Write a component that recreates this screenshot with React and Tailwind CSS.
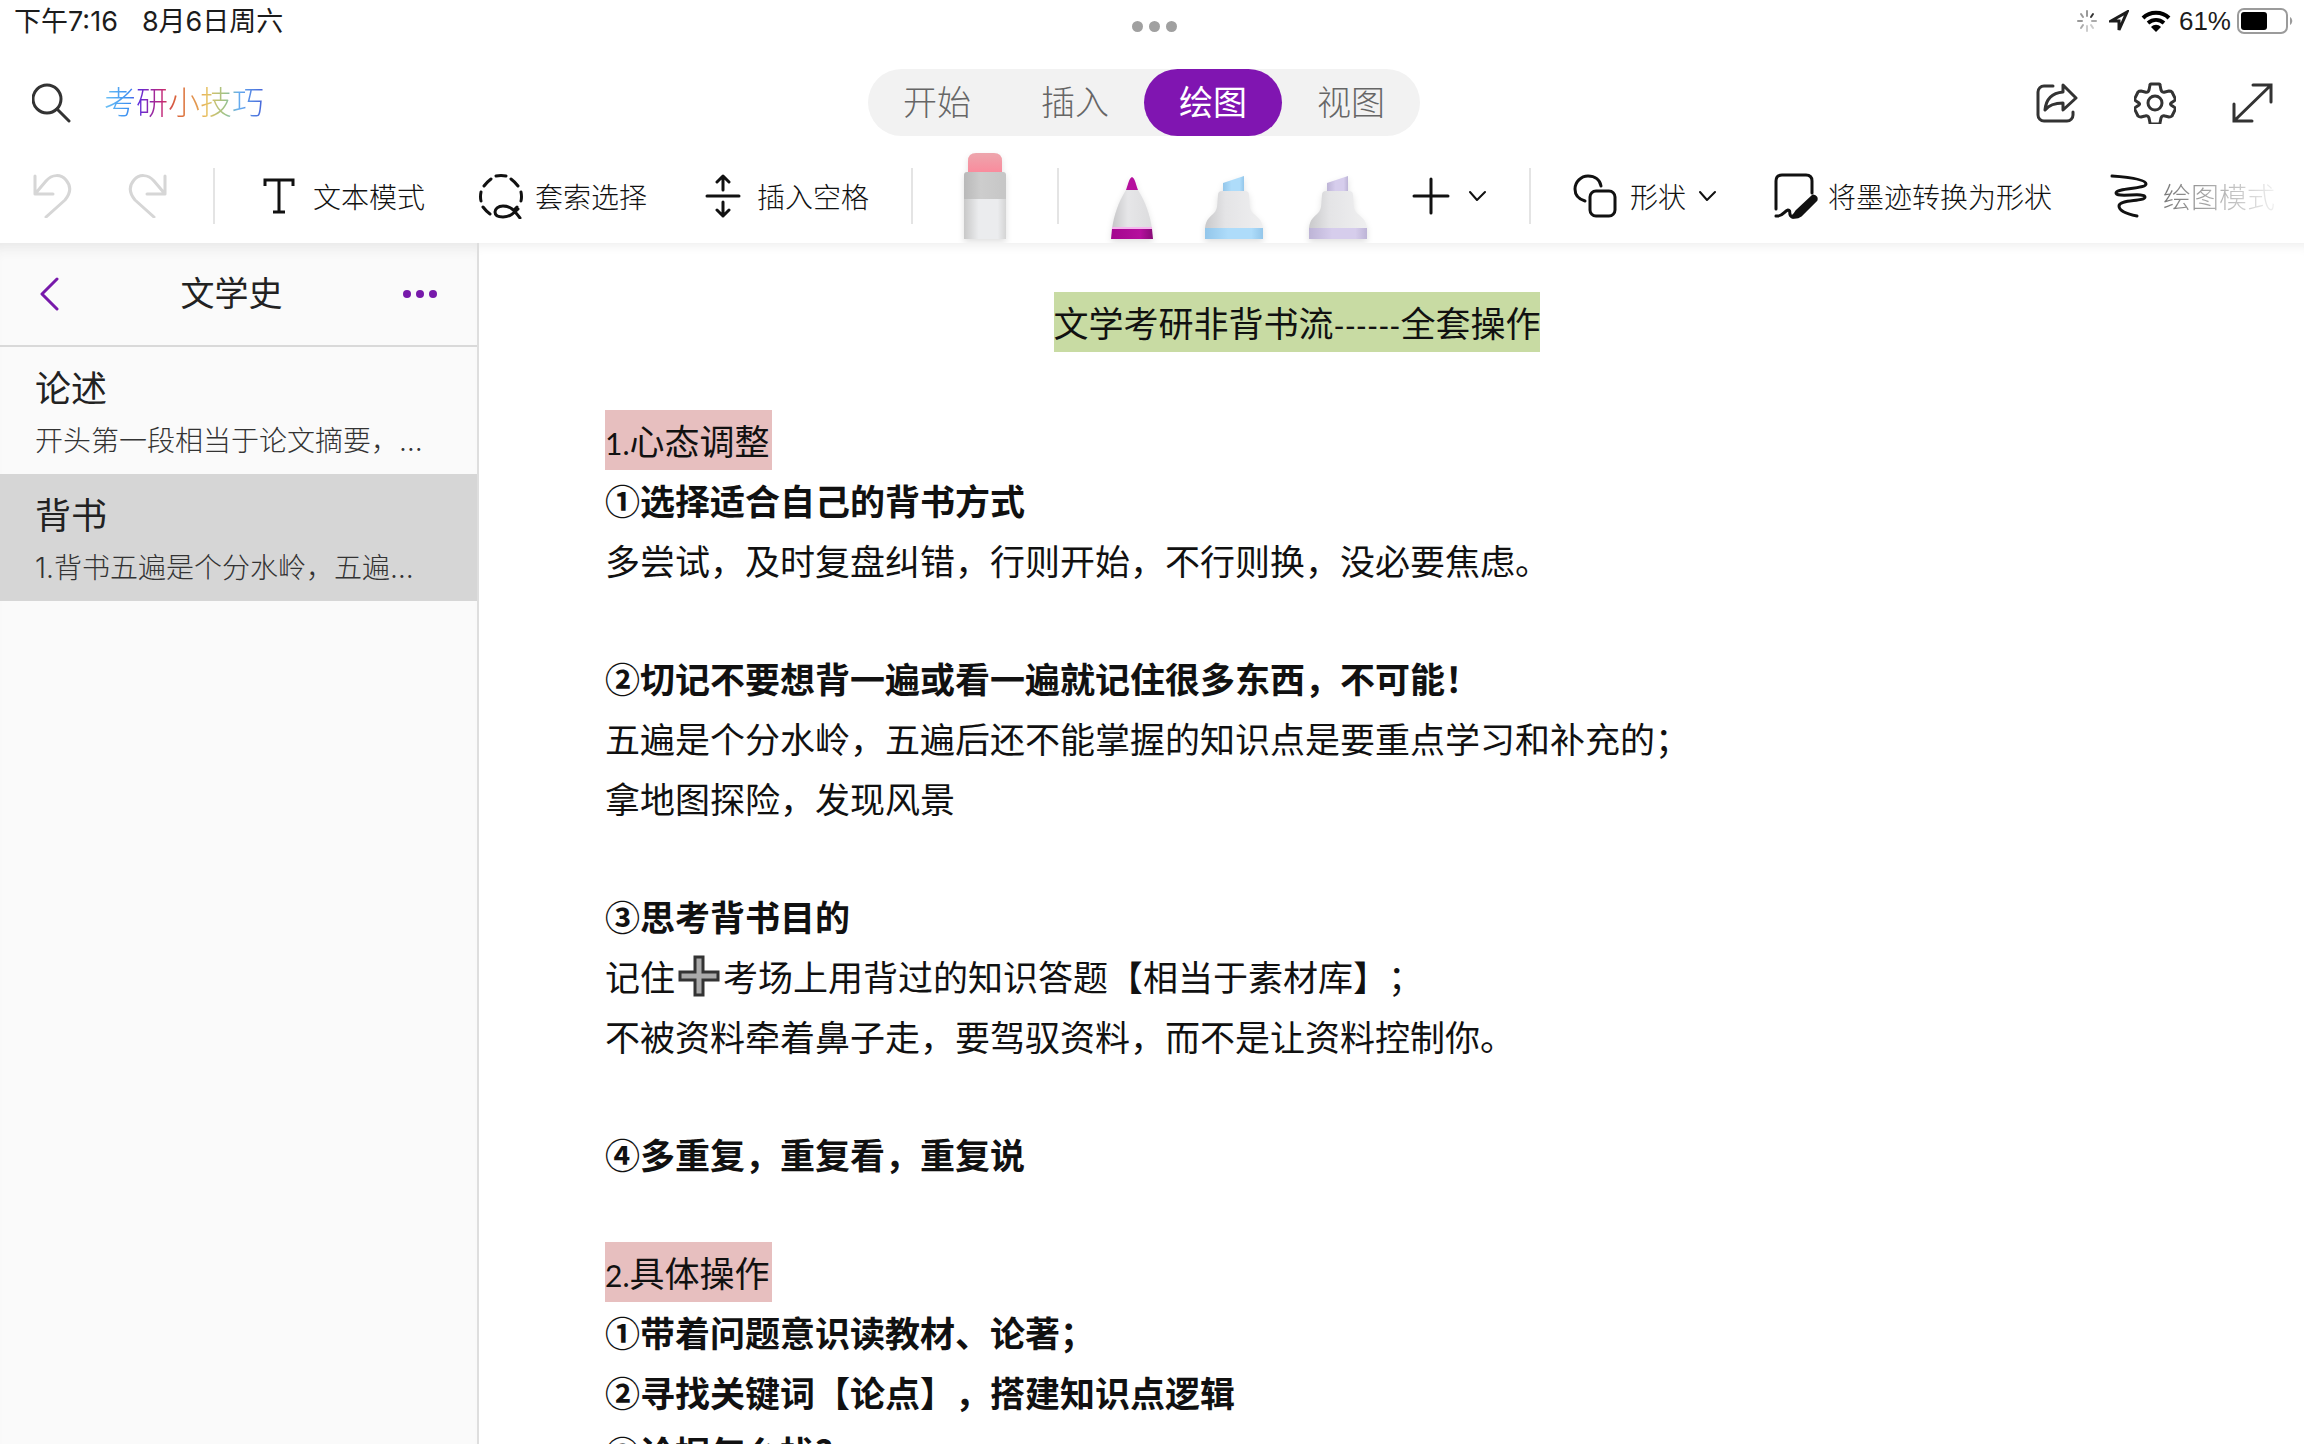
import { useState } from "react";

const tabs = ["开始", "插入", "绘图", "视图"];

const pages = [
  { title: "论述", preview: "开头第一段相当于论文摘要，…" },
  { title: "背书", preview: "1.背书五遍是个分水岭，五遍…" },
];

const notes = [
  { type: "heading", num: "1.", text: "心态调整" },
  { type: "bold", text: "①选择适合自己的背书方式" },
  { type: "text", text: "多尝试，及时复盘纠错，行则开始，不行则换，没必要焦虑。" },
  { type: "blank" },
  { type: "bold", text: "②切记不要想背一遍或看一遍就记住很多东西，不可能！" },
  { type: "text", text: "五遍是个分水岭，五遍后还不能掌握的知识点是要重点学习和补充的；" },
  { type: "text", text: "拿地图探险，发现风景" },
  { type: "blank" },
  { type: "bold", text: "③思考背书目的" },
  { type: "plus", before: "记住", text: "考场上用背过的知识答题【相当于素材库】；" },
  { type: "text", text: "不被资料牵着鼻子走，要驾驭资料，而不是让资料控制你。" },
  { type: "blank" },
  { type: "bold", text: "④多重复，重复看，重复说" },
  { type: "blank" },
  { type: "heading", num: "2.", text: "具体操作" },
  { type: "bold", text: "①带着问题意识读教材、论著；" },
  { type: "bold", text: "②寻找关键词【论点】，搭建知识点逻辑" },
  { type: "bold", text: "③论据怎么找?" },
];

function Icon({ w, h, stroke = 3, className = "", children }) {
  return (
    <svg
      width={w}
      height={h}
      viewBox={`0 0 ${w} ${h}`}
      fill="none"
      stroke="currentColor"
      strokeWidth={stroke}
      strokeLinecap="round"
      strokeLinejoin="round"
      className={`shrink-0 ${className}`}
      aria-hidden="true"
    >
      {children}
    </svg>
  );
}

function Divider({ className }) {
  return <div className={`h-14 w-0.5 shrink-0 bg-[#e4e4e4] ${className}`} />;
}

function StatusBar() {
  return (
    <div className="grid h-[42px] grid-cols-[1fr_auto_1fr] items-center pr-[10px] pl-[14px] leading-none text-[#1c1c1c]">
      <div className="flex gap-6 text-[27px]">
        <span>下午7:16</span>
        <span>8月6日周六</span>
      </div>
      <div className="flex gap-[6px] pt-[11px]">
        <span className="size-[11px] rounded-full bg-[#a0a0a0]" />
        <span className="size-[11px] rounded-full bg-[#a0a0a0]" />
        <span className="size-[11px] rounded-full bg-[#a0a0a0]" />
      </div>
      <div className="flex items-center justify-end text-[26px]">
        <Icon w={20} h={22} stroke={2}>
          <path d="M10 1v5M4 4l2 3M1 11h4" stroke="#999" />
          <path d="M16 4l-2 3" stroke="#333" />
          <path d="M19 11h-4M4 18l2-3" stroke="#aaa" />
          <path d="M16 18l-2-3M10 21v-5" stroke="#ccc" />
        </Icon>
        <Icon w={20} h={22} stroke={3} className="ml-3">
          <path d="M18 2L2 11h8v9z" strokeLinejoin="miter" />
        </Icon>
        <svg width="30" height="22" viewBox="0 0 30 22" className="ml-3" fill="none" stroke="#000" strokeWidth="4" aria-hidden="true">
          <path d="M2 8C9 1 21 1 28 8" />
          <path d="M7 13c5-4 11-4 16 0" />
          <path d="M10 17c3-3 7-3 10 0l-5 5z" fill="#000" stroke="none" />
        </svg>
        <span className="ml-2 font-['Liberation_Sans']">61%</span>
        <svg width="57" height="26" viewBox="0 0 57 26" className="ml-1.5" aria-hidden="true">
          <rect x="1" y="1" width="49" height="24" rx="6" fill="none" stroke="#9b9b9b" strokeWidth="2" />
          <rect x="4" y="4" width="26" height="18" rx="3" fill="#000" />
          <path d="M53 9c3 2 3 6 0 8z" fill="#9b9b9b" />
        </svg>
      </div>
    </div>
  );
}

function TopBar() {
  const [active, setActive] = useState("绘图");
  return (
    <div className="grid grid-cols-[1fr_auto_1fr] items-center pt-[27px] pr-4 text-[#333]">
      <div className="flex items-center pl-8">
        <button aria-label="搜索">
          <Icon w={40} h={40}>
            <circle cx="15" cy="16" r="14" />
            <path d="M25 26l12 12" />
          </Icon>
        </button>
        <h1 className="ml-8 bg-[linear-gradient(90deg,#6fc4f5_0%,#3a8cf0_16%,#5a2be0_21%,#c0257a_36%,#d9603a_44%,#e39a50_58%,#e8c060_64%,#9cc388_76%,#66aef0_84%,#4562d8_100%)] bg-clip-text text-[32px] leading-10 font-light text-transparent">
          考研小技巧
        </h1>
      </div>
      <nav className="flex rounded-full bg-[#f2f2f2]">
        {tabs.map((tab) => (
          <button
            key={tab}
            onClick={() => setActive(tab)}
            className={`h-[67px] w-[138px] rounded-full text-[34px] leading-none ${
              tab === active ? "bg-[#8015b1] text-white" : "font-light text-[#666]"
            }`}
          >
            {tab}
          </button>
        ))}
      </nav>
      <div className="flex items-center justify-end gap-14 pr-[14px]">
        <button aria-label="共享">
          <Icon w={42} h={40}>
            <path d="M17 3H8a6 6 0 0 0-6 6v23a6 6 0 0 0 6 6h23a6 6 0 0 0 6-6v-3" />
            <path d="M27 2l13 13-13 12v-7c-9 0-14 2-18 7 1-11 7-17 18-18z" />
          </Icon>
        </button>
        <button aria-label="设置">
          <Icon w={42} h={42}>
            <circle cx="21" cy="21" r="7" />
            <path d="M17 2h8q1 0 1 1l1 5q1 3 4 2l4-1q2 0 3 1l3 6q1 2-1 3l-3 2q-1 1 0 2l3 2q2 1 1 3l-3 6q-1 1-3 1l-4-1q-3-1-4 2l-1 5q0 1-1 1h-8q-1 0-1-1l-1-5q-1-3-4-2l-4 1q-2 0-3-1l-3-6q-1-2 1-3l3-2q1-1 0-2l-3-2q-2-1-1-3l3-6q1-1 3-1l4 1q3 1 4-2l1-5q0-1 1-1z" />
          </Icon>
        </button>
        <button aria-label="全屏">
          <Icon w={42} h={40}>
            <path d="M2 38L39 2M21 2h18v17M2 21v17h18" strokeLinejoin="miter" />
          </Icon>
        </button>
      </div>
    </div>
  );
}

function Highlighter({ id, color, dark }) {
  return (
    <svg width="58" height="64" viewBox="0 0 58 64" className="drop-shadow-md" aria-hidden="true">
      <defs>
        <linearGradient id={id}>
          <stop offset="0" stopColor="#c9c9cb" />
          <stop offset=".35" stopColor="#e4e4e6" />
          <stop offset="1" stopColor="#efeff0" />
        </linearGradient>
        <linearGradient id={`${id}-ink`}>
          <stop offset="0" stopColor={dark} />
          <stop offset=".4" stopColor={color} />
          <stop offset=".8" stopColor={color} />
          <stop offset="1" stopColor={dark} />
        </linearGradient>
      </defs>
      <path d="M18 18V8L39 1v17z" fill={`url(#${id}-ink)`} />
      <path d="M0 53c1-9 5-11 9-15 4-4 3-9 4-18q0-4 4-4h23q4 0 4 4c1 9 0 14 4 18 4 4 9 6 10 15z" fill={`url(#${id})`} />
      <path d="M0 53h58v11H0z" fill={`url(#${id}-ink)`} />
    </svg>
  );
}

function Eraser() {
  return (
    <svg width="42" height="86" viewBox="0 0 42 86" className="drop-shadow-md" aria-hidden="true">
      <defs>
        <linearGradient id="rubber" x1="0" y1="0" x2="0" y2="1">
          <stop offset="0" stopColor="#eda6ad" />
          <stop offset="1" stopColor="#fa8a9c" />
        </linearGradient>
        <linearGradient id="sleeve">
          <stop offset="0" stopColor="#b9b9b9" />
          <stop offset=".4" stopColor="#cdcdcd" />
          <stop offset="1" stopColor="#c6c6c6" />
        </linearGradient>
        <linearGradient id="barrel">
          <stop offset="0" stopColor="#c8c8c8" />
          <stop offset=".35" stopColor="#ebecee" />
          <stop offset=".8" stopColor="#ebecee" />
          <stop offset="1" stopColor="#d4d4d4" />
        </linearGradient>
      </defs>
      <path d="M4 20V8q0-8 8-8h18q8 0 8 8v12z" fill="url(#rubber)" />
      <path d="M0 46V22q0-3 3-3h36q3 0 3 3v24z" fill="url(#sleeve)" />
      <path d="M0 46h42v40H0z" fill="url(#barrel)" />
    </svg>
  );
}

function Pen() {
  return (
    <svg width="42" height="62" viewBox="0 0 42 62" className="drop-shadow-md" aria-hidden="true">
      <defs>
        <linearGradient id="cone">
          <stop offset="0" stopColor="#c6c6c8" />
          <stop offset=".4" stopColor="#e6e6e8" />
          <stop offset="1" stopColor="#dcdcde" />
        </linearGradient>
        <linearGradient id="ink">
          <stop offset="0" stopColor="#a3068e" />
          <stop offset=".7" stopColor="#b5109d" />
          <stop offset="1" stopColor="#860b76" />
        </linearGradient>
      </defs>
      <path d="M15 13h12C35 26 39 38 41 52H1C3 38 7 26 15 13z" fill="url(#cone)" />
      <path d="M15 13c2-5 3-12 6-13 3 1 4 8 6 13z" fill="#b5109d" />
      <path d="M1 50h40v2H1z" fill="#f5b5ee" />
      <path d="M1 52h40l1 10H0z" fill="url(#ink)" />
    </svg>
  );
}

function Toolbar() {
  return (
    <div className="flex items-center overflow-hidden pt-[17px] pb-1 pl-8 text-[28px] leading-none font-light whitespace-nowrap text-[#111] *:shrink-0">
      <button aria-label="撤消" className="text-[#d6d6d6]">
        <Icon w={40} h={44}>
          <path d="M3 2v18h18M3 20L14 7c6-7 15-7 20-1 6 7 4 14-1 20L14 43" />
        </Icon>
      </button>
      <button aria-label="恢复" className="ml-14 text-[#d6d6d6]">
        <Icon w={40} h={44}>
          <path d="M37 2v18H19M37 20L26 7C20 0 11 0 6 6c-6 7-4 14 1 20l19 17" />
        </Icon>
      </button>
      <Divider className="ml-[45px]" />
      <button className="ml-12 flex items-center gap-[18px]">
        <Icon w={32} h={36}>
          <path d="M2 8V2h28v6M16 2v32M10 34h12" strokeLinecap="butt" strokeLinejoin="miter" />
        </Icon>
        <span className="pt-1">文本模式</span>
      </button>
      <button className="ml-[54px] flex items-center gap-3">
        <Icon w={44} h={46}>
          <path d="M17 3q5-1 10 0M32 6q4 3 7 7M42 19q1 5 0 9M12 6q-4 3-7 7M2 19q-1 5 0 9M4 34q3 4 7 7M38 34l-2 2" />
          <path d="M41 45c-5-6-8-12-17-12-5 0-8 3-8 6s3 5 8 5c7 0 11-4 15-8" />
        </Icon>
        <span className="pt-1">套索选择</span>
      </button>
      <button className="ml-[58px] flex items-center gap-4">
        <Icon w={36} h={44}>
          <path d="M2 22h32M18 16V2M12 8l6-6 6 6M18 28v14M12 36l6 6 6-6" />
        </Icon>
        <span className="pt-1">插入空格</span>
      </button>
      <Divider className="ml-[42px]" />
      <button aria-label="橡皮擦" className="ml-[51px]">
        <Eraser />
      </button>
      <Divider className="ml-[51px]" />
      <button aria-label="笔" className="ml-[52px] self-end">
        <Pen />
      </button>
      <button aria-label="蓝色荧光笔" className="ml-[52px] self-end">
        <Highlighter id="blue" color="#aedcfa" dark="#93c6ea" />
      </button>
      <button aria-label="紫色荧光笔" className="ml-[46px] self-end">
        <Highlighter id="lilac" color="#d6cdec" dark="#bdb4d6" />
      </button>
      <button aria-label="添加笔" className="ml-[45px] flex items-center gap-[19px]">
        <Icon w={38} h={38}>
          <path d="M19 2v34M2 19h34" />
        </Icon>
        <Icon w={17} h={12} stroke={2}>
          <path d="M1 2l7 8 8-8" />
        </Icon>
      </button>
      <Divider className="ml-[43px]" />
      <button className="ml-[42px] flex items-center gap-[13px]">
        <Icon w={44} h={44}>
          <path d="M12 27C5 25 2 20 2 15 2 8 8 2 15 2c7 0 12 4 13 10" />
          <rect x="17" y="17" width="25" height="25" rx="6" />
        </Icon>
        <span className="pt-1">形状</span>
        <Icon w={17} h={12} stroke={2}>
          <path d="M1 2l7 8 8-8" />
        </Icon>
      </button>
      <button className="ml-[58px] flex items-center gap-[10px]">
        <Icon w={44} h={46}>
          <path d="M2 36V8q0-6 6-6h24q6 0 6 6v12" />
          <path d="M2 43c7 1 8-5 12-6 4 0-1 6 5 7" />
          <path d="M39 23q4 1 3 4L27 42q-4 3-9 2 3-2 5-6z" fill="currentColor" />
        </Icon>
        <span className="pt-1">将墨迹转换为形状</span>
      </button>
      <button className="ml-[58px] flex items-center gap-[15px]">
        <Icon w={38} h={44}>
          <path d="M2 2c14 1 34 3 34 8S6 14 6 19s29-1 29 4S9 25 9 32c0 5 8 8 18 10" />
        </Icon>
        <span className="bg-linear-to-r from-[#777] to-[#f0f0f0] bg-clip-text pt-1 text-transparent">
          绘图模式
        </span>
      </button>
    </div>
  );
}

function Sidebar() {
  const [selected, setSelected] = useState("背书");
  return (
    <aside className="w-[479px] shrink-0 border-r-2 border-[#dedede] bg-[#fafafa] shadow-[inset_0_14px_14px_-10px_#e6e6e6]">
      <div className="flex h-[104px] items-center justify-between border-b-2 border-[#d9d9d9] px-10">
        <button aria-label="返回" className="text-[#7719aa]">
          <Icon w={20} h={34}>
            <path d="M17 2L2 17l15 15" />
          </Icon>
        </button>
        <h2 className="text-[34px] leading-none text-[#222]">文学史</h2>
        <button aria-label="更多" className="flex gap-[5px]">
          <span className="size-2 rounded-full bg-[#7719aa]" />
          <span className="size-2 rounded-full bg-[#7719aa]" />
          <span className="size-2 rounded-full bg-[#7719aa]" />
        </button>
      </div>
      {pages.map((page) => (
        <button
          key={page.title}
          onClick={() => setSelected(page.title)}
          className={`block h-[127px] w-full pt-2 pl-[35px] text-left whitespace-nowrap ${
            page.title === selected ? "bg-[#d6d6d6]" : ""
          }`}
        >
          <span className="block text-[36px] leading-[52px] text-[#222]">
            {page.title}
          </span>
          <span className="block text-[28px] leading-[52px] font-light text-[#333]">
            {page.preview}
          </span>
        </button>
      ))}
    </aside>
  );
}

function Line({ note }) {
  if (note.type === "blank") return <div className="h-[58px]" />;
  if (note.type === "heading") {
    return (
      <h3 className="flex h-[60px]">
        <span className="h-[60px] bg-[#e7bfbf] pr-0.5">
          <span className="font-['Lato'] text-[30px] leading-none">{note.num}</span>
          {note.text}
        </span>
      </h3>
    );
  }
  if (note.type === "bold") return <p className="font-bold">{note.text}</p>;
  if (note.type === "plus") {
    return (
      <p className="flex items-center">
        {note.before}
        <svg width="48" height="44" viewBox="0 0 48 44" aria-hidden="true">
          <path d="M20 3h8v15h15v8H28v15h-8V26H5v-8h15z" fill="#aaa" stroke="#333" strokeWidth="3" />
        </svg>
        {note.text}
      </p>
    );
  }
  return <p>{note.text}</p>;
}

function App() {
  return (
    <div
      lang="zh-CN"
      className="flex h-screen flex-col overflow-hidden bg-white font-['Inter','Noto_Sans_CJK_SC',sans-serif] [text-spacing-trim:space-all]"
    >
      <header className="shrink-0">
        <StatusBar />
        <TopBar />
        <Toolbar />
      </header>
      <div className="flex min-h-0 flex-1">
        <Sidebar />
        <main className="min-w-0 flex-1 overflow-hidden pt-[49px] pl-[126px] font-['Noto_Sans_CJK_SC',sans-serif] text-[35px] leading-[60px] text-[#111] shadow-[inset_0_12px_12px_-10px_#ececec]">
          <div className="max-w-[1384px]">
            <h2 className="flex h-[60px] justify-center">
              <span className="h-[60px] bg-[#c8dba3]">
                文学考研非背书流
                <span className="font-['Lato'] text-[30px] leading-none">------</span>
                全套操作
              </span>
            </h2>
            <div className="h-[58px]" />
            {notes.map((note, i) => (
              <Line key={i} note={note} />
            ))}
          </div>
        </main>
      </div>
    </div>
  );
}

export default App;
